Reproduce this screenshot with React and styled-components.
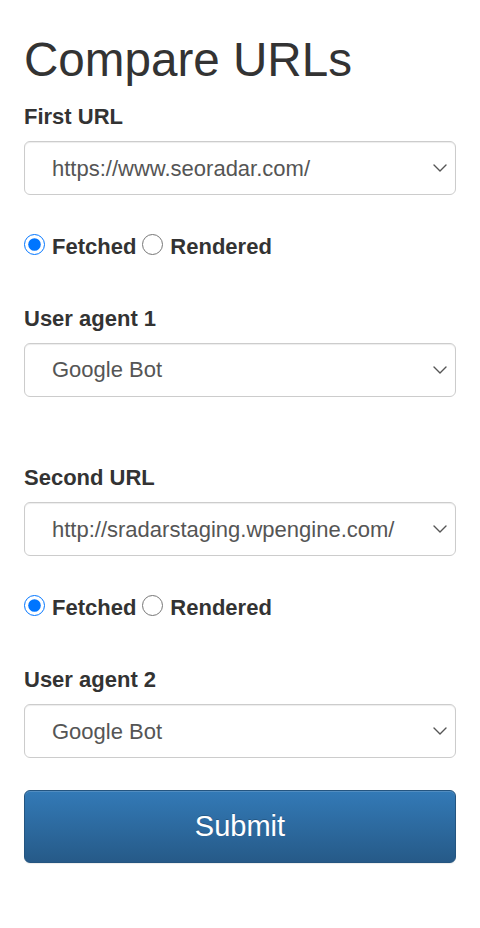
import React, { useState } from "react";
import styled, { createGlobalStyle } from "styled-components";

const Global = createGlobalStyle`
  html, body { margin: 0; padding: 0; background: #fff; }
  body { font-family: "Liberation Sans", Arial, sans-serif; color: #333; }
  * { box-sizing: border-box; }
`;

const Page = styled.form`
  padding: 0 24px 40px;
  display: flex;
  flex-direction: column;
`;

const Title = styled.h1`
  margin: 34px 0 15px;
  font-size: 47.6px;
  line-height: 51.7px;
  font-weight: 400;
  color: #333;
`;

const Label = styled.label`
  display: block;
  font-size: 22px;
  line-height: 31.4px;
  font-weight: 700;
  color: #333;
  margin: ${(p) => p.$top || 0}px 0 9px;
`;

const SelectWrap = styled.div`
  position: relative;
  width: 100%;
`;

const Select = styled.select`
  display: block;
  width: 100%;
  height: 54px;
  padding: 0 44px 0 27px;
  appearance: none;
  -webkit-appearance: none;
  font-family: "Liberation Sans", Arial, sans-serif;
  font-size: 22px;
  color: #555;
  background: #fff;
  border: 1px solid #ccc;
  border-radius: 6px;
  box-shadow: inset 0 1px 1px rgba(0, 0, 0, 0.075);
`;

const Chevron = styled.svg`
  position: absolute;
  right: 9px;
  top: 50%;
  width: 14px;
  height: 8px;
  margin-top: -4px;
  pointer-events: none;
`;

const RadioRow = styled.div`
  display: flex;
  align-items: center;
  margin-top: 36px;
  height: 31.4px;
`;

const RadioLabel = styled.label`
  display: inline-flex;
  align-items: center;
  gap: 7px;
  margin-right: 6px;
  font-size: 22px;
  line-height: 31.4px;
  font-weight: 700;
  color: #333;
`;

const Radio = styled.input`
  width: 21px;
  height: 21px;
  margin: 0 0 5px 0;
  accent-color: #0075ff;
`;

const Submit = styled.button`
  margin-top: 32px;
  height: 73px;
  width: 100%;
  font-family: "Liberation Sans", Arial, sans-serif;
  font-size: 29px;
  color: #fff;
  border: 1px solid #245580;
  border-radius: 6px;
  background: linear-gradient(to bottom, #337ab7 0%, #265a88 100%);
  box-shadow: inset 0 1px 0 rgba(255, 255, 255, 0.15), 0 1px 1px rgba(0, 0, 0, 0.075);
  text-shadow: 0 -1px 0 rgba(0, 0, 0, 0.2);
  cursor: pointer;
`;

function Dropdown({ value, children }) {
  return (
    <SelectWrap>
      <Select defaultValue={value}>{children}</Select>
      <Chevron viewBox="0 0 14 8" fill="none">
        <path d="M1 1 L7 7 L13 1" stroke="#555" strokeWidth="1.4" strokeLinecap="round" strokeLinejoin="round" />
      </Chevron>
    </SelectWrap>
  );
}

function UrlField({ label, top, url, name }) {
  const [mode, setMode] = useState("fetched");
  return (
    <>
      <Label $top={top}>{label}</Label>
      <Dropdown value={url}>
        <option value={url}>{url}</option>
      </Dropdown>
      <RadioRow>
        <RadioLabel>
          <Radio type="radio" name={name} checked={mode === "fetched"} onChange={() => setMode("fetched")} />
          Fetched
        </RadioLabel>
        <RadioLabel>
          <Radio type="radio" name={name} checked={mode === "rendered"} onChange={() => setMode("rendered")} />
          Rendered
        </RadioLabel>
      </RadioRow>
    </>
  );
}

function AgentField({ label }) {
  return (
    <>
      <Label $top={40}>{label}</Label>
      <Dropdown value="google">
        <option value="google">Google Bot</option>
      </Dropdown>
    </>
  );
}

export default function App() {
  return (
    <>
      <Global />
      <Page onSubmit={(e) => e.preventDefault()}>
        <Title>Compare URLs</Title>
        <UrlField label="First URL" top={0} url="https://www.seoradar.com/" name="m1" />
        <AgentField label="User agent 1" />
        <UrlField label="Second URL" top={65} url="http://sradarstaging.wpengine.com/" name="m2" />
        <AgentField label="User agent 2" />
        <Submit type="submit">Submit</Submit>
      </Page>
    </>
  );
}
